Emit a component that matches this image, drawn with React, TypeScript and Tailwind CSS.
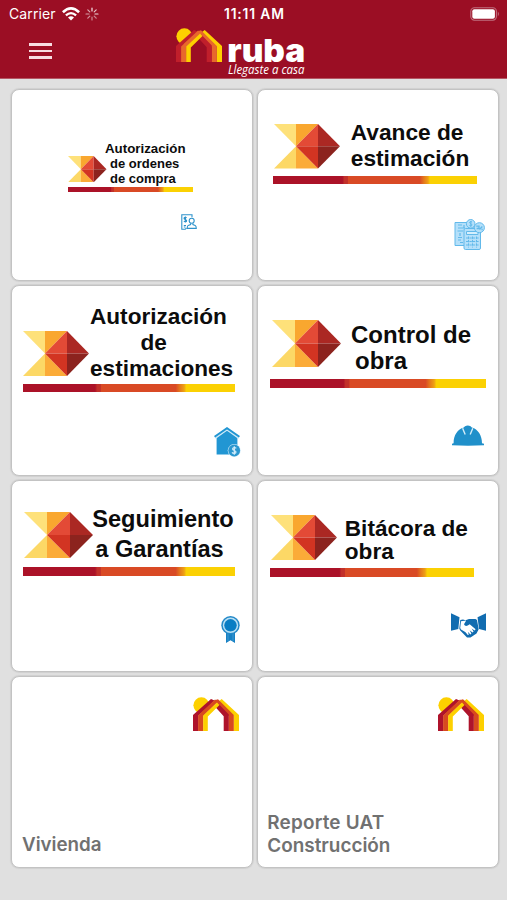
import type { ReactNode } from "react";

function House({ className, onRed = false }: { className: string; onRed?: boolean }) {
  const crimson = onRed ? "#c01f2b" : "#ae132b";
  const orange = onRed ? "#e8682c" : "#d84a1f";
  return (
    <svg viewBox="0 0 46 34" preserveAspectRatio="none" className={className}>
      <circle cx="8.4" cy="8.3" r="8" fill="#fdd000" />
      <path d="M26 4L28.7 2L46 18V34H40.6V18.5Z" fill="#fdd000" />
      <path d="M22.5 3L25 2.3L40.8 18V34H35.5V19L24 8Z" fill={orange} />
      <path d="M22.8 10.5L25.2 6.6L35.8 17.6V34H30.7V19.2Z" fill={crimson} />
      <path d="M0 34V18L18 2L21.5 3.5L5.3 18.8V34Z" fill={crimson} />
      <path d="M5.1 34V18.4L22 2.6L25.2 4.6L10.4 19V34Z" fill={orange} />
      <path d="M10.2 34V18.6L24 5.4L26.5 8L14.8 19.4V34Z" fill="#fdd000" />
    </svg>
  );
}

function Arrow({ className }: { className: string }) {
  return (
    <svg viewBox="0 0 66 44" preserveAspectRatio="none" className={`shrink-0 ${className}`}>
      <path d="M0 0H22V22Z" fill="#fee17a" />
      <path d="M0 44H22V22Z" fill="#fcd866" />
      <path d="M22 0H44L22 22Z" fill="#f9a72f" />
      <path d="M22 44H44L22 22Z" fill="#fbab38" />
      <path d="M44 0L22 22H44Z" fill="#e34a36" />
      <path d="M44 44L22 22H44Z" fill="#d23422" />
      <path d="M44 0L66 22H44Z" fill="#ab2823" />
      <path d="M44 44L66 22H44Z" fill="#8c231e" />
    </svg>
  );
}

function Stripe({ className }: { className: string }) {
  return (
    <div
      className={`shrink-0 bg-[linear-gradient(90deg,#ab1228_0%,#ab1228_34%,#c2302a_35%,#c2302a_36.5%,#d94a25_37%,#d94a25_72%,#e5791c_74%,#eea014_76%,#fbd103_77%)] ${className}`}
    />
  );
}

function Card({ children }: { children: ReactNode }) {
  return (
    <div className="flex flex-col overflow-hidden rounded-[8px] border border-[#c3c3c3] bg-white shadow-[0_0_1px_1px_#d0d0d0]">
      {children}
    </div>
  );
}

function InvoiceUser() {
  return (
    <svg viewBox="0 0 16 16" className="mt-[22px] ml-[169px] size-[16px]" fill="none" stroke="#2f93cb" strokeWidth="1.1">
      <path d="M11 3.2V.7H.8V15.3H4.2L5.5 14M2.8 11.5H5M2.8 13H4.5" />
      <path d="M5.6 3.8C4.8 3 3 3.2 3.1 4.5C3.2 5.8 5.6 5.2 5.6 6.7C5.6 8 3.7 8.1 2.9 7.2M4.4 2.4V8.6" strokeWidth="1.2" />
      <circle cx="10.7" cy="6.7" r="2.5" />
      <path d="M9.6 9.3V10.6L7.2 11.4Q6.2 12 6.2 14.4H15.3Q15.3 12 14.2 11.4L11.9 10.6V9.3" />
    </svg>
  );
}

function Calculator() {
  return (
    <svg viewBox="0 0 31 31" className="mt-[35px] ml-[196px] size-[31px]" fill="#b5e0fa" stroke="#62b9ea" strokeWidth="1">
      <path d="M1 3.5H20V26.5H1Z" />
      <path d="M4 6H8M4 9H11M3.5 12H9M6 14V17M4 18.5H8M4 21H7M6 23.5H9M10 6V9M11 12V15" strokeWidth="1.2" />
      <rect x="10" y="9.5" width="16.5" height="21" rx="1.5" />
      <path d="M12.5 12.5H24V15.5H12.5Z" fill="#d5effd" />
      <path d="M12 19H25M12 22.5H25M12 26H25M14.5 17.5V28.5M18.5 17.5V28.5M22.5 17.5V28.5" strokeDasharray="2.4 1" />
      <circle cx="16.7" cy="4.8" r="4.3" />
      <path d="M18 3C16.5 2.2 15.3 3 15.7 4C16.2 5 18 4.6 18 6C17.8 7 16.4 7.2 15.4 6.4M16.8 2V7.8" />
      <circle cx="25.4" cy="8.7" r="5" />
      <path d="M22.2 7.2H25V9.5H22.6M25.5 10.5L28.3 7.5M27.5 10.5H28.7" strokeWidth="1.3" />
    </svg>
  );
}

function HousePrice() {
  return (
    <svg viewBox="0 0 27 30" className="mt-[35px] ml-[202px] h-[30px] w-[27px]">
      <path d="M2.6 10.8L13 3L23.4 10.8V27.5H2.6Z" fill="#2196d3" />
      <path d="M1 10.8L13 2.2L25 10.8" fill="none" stroke="#cbe8f7" strokeWidth="2.6" />
      <path d="M.6 9.7L13 1.2L25.4 9.7" fill="none" stroke="#2196d3" strokeWidth="2" />
      <circle cx="20.2" cy="23.5" r="6.5" fill="#d5eefb" />
      <circle cx="20.2" cy="23.5" r="5.9" fill="#2b97cf" />
      <path d="M22.2 21.4C21.4 20.1 18.5 20.2 18.6 22C18.7 23.8 22 23.1 22 25C22 26.8 19 26.9 18 25.4M20.3 19.3V27.8" fill="none" stroke="#d5eefb" strokeWidth="1.2" />
    </svg>
  );
}

function Helmet() {
  return (
    <svg viewBox="0 0 32 21" className="mt-[36.5px] ml-[193.5px] h-[21px] w-[32px]">
      <path d="M0 20.3V18.8L1.6 18.2C1.5 10 5.6 4.2 11.8 2.4L13 1.3Q15.8-.5 18.6 1.3L19.8 2.4C26 4.2 30 10 30 18.2L32 18.8V20.3Q16 21.2 0 20.3Z" fill="#2090ca" />
      <path d="M10.6 3.2L13.2 9.4M20.8 3.2L18.2 9.4" stroke="#d3ecf8" strokeWidth="1.4" fill="none" />
    </svg>
  );
}

function Rosette() {
  return (
    <svg viewBox="0 0 19 27" className="mt-[40px] ml-[208.5px] h-[27px] w-[19px]">
      <path d="M5 15H14V27L9.5 24.3L5 27Z" fill="#1780c3" />
      <path d="M7 18V25M12 18V25" stroke="#4ba3d8" strokeWidth=".7" />
      <circle cx="9.5" cy="9.3" r="9.2" fill="#2489c8" />
      <circle cx="9.5" cy="9.3" r="7" fill="none" stroke="#b9e0f5" strokeWidth="1.5" />
      <circle cx="9.5" cy="9.3" r="5.8" fill="#087dc4" />
    </svg>
  );
}

function Handshake() {
  return (
    <svg viewBox="0 0 35 25" className="mt-[36.3px] ml-[193px] h-[25px] w-[35px]">
      <path d="M0 .3L8.5 4.3L7.3 16L0 17.8Z" fill="#116cb0" />
      <path d="M35 .3L26.5 4.3L28 16L35 17.8Z" fill="#116cb0" />
      <path d="M14.5 7.2L18 6H24.5L26 7L27.7 16.2L25.5 20.5L19.5 24.6L16 24.4L9 17.3L8.3 15.5L9.3 7L12 6.6Z" fill="#116cb0" />
      <path d="M10 8.2L15.2 7.5L13 11.3Q14.5 14.5 18.7 11.2L24.6 16.2L23.6 17.4L20.6 15.4L22.6 18.6L21.6 19.6L18.6 17.2L20.4 20.6L19.4 21.4L16.8 18.8L17.8 21.8L16.8 22L14.8 19.6L13 18.2L10 16.5L9.2 15Z" fill="#fff" />
    </svg>
  );
}

function StatusBar() {
  return (
    <div className="flex h-[27px] items-center text-white">
      <span className="w-[62px] pl-[9px] text-[14px] leading-[27px] tracking-[0.1px]">Carrier</span>
      <svg viewBox="0 0 18 14" className="h-[14px] w-[18px]" fill="none" stroke="#fff" strokeWidth="2.6">
        <path d="M.9 5.3Q9-2.4 17.1 5.3" />
        <path d="M3.9 8.4Q9 3.8 14.1 8.4" strokeWidth="2.3" />
        <path d="M9 13.4L6 10.5Q9 8.2 12 10.5Z" fill="#fff" stroke="none" />
      </svg>
      <svg viewBox="0 0 14 14" className="ml-[4.5px] size-[14px]" stroke="#fff" strokeWidth="1.2" strokeLinecap="round">
        <path d="M7 1V4" opacity=".9" />
        <path d="M11.2 2.8L9.2 4.8" opacity=".75" />
        <path d="M13 7H10" opacity=".85" />
        <path d="M11.2 11.2L9.2 9.2" opacity=".5" />
        <path d="M7 13V10" opacity=".5" />
        <path d="M2.8 11.2L4.8 9.2" opacity=".55" />
        <path d="M1 7H4" opacity=".6" />
        <path d="M2.8 2.8L4.8 4.8" opacity=".65" />
      </svg>
      <span className="ml-[125.5px] pt-px text-[13.8px] leading-[26px] font-semibold tracking-[0.85px] whitespace-nowrap">11:11 AM</span>
      <svg viewBox="0 0 30 14" className="mr-[7.5px] ml-auto h-[14px] w-[30px]">
        <rect x=".8" y=".8" width="25.6" height="12.4" rx="3.6" fill="none" stroke="#c0707f" strokeWidth="1.1" />
        <rect x="2.3" y="2.3" width="22.6" height="9.4" rx="2" fill="#fff" />
        <path d="M27.8 4.6Q30 7 27.8 9.4Z" fill="#c0707f" />
      </svg>
    </div>
  );
}

export default function App() {
  return (
    <div className="min-h-[900px] w-[507px] bg-[#e0e0e0] font-['Inter','Liberation_Sans',sans-serif]">
      <header className="h-[79px] border-b border-[#b45764] bg-[#9b0e24]">
        <StatusBar />
        <div className="flex items-start">
          <button aria-label="Menú" className="mt-[16px] ml-[28.5px] flex w-[23.5px] flex-col gap-[4px]">
            <span className="h-[2.7px] bg-[#f8dde2]" />
            <span className="h-[2.7px] bg-[#f8dde2]" />
            <span className="h-[2.7px] bg-[#f8dde2]" />
          </button>
          <House onRed className="mt-[0.7px] ml-[124px] h-[34px] w-[46px]" />
          <svg viewBox="0 0 84 50" className="ml-[4px] h-[50px] w-[84px]" fill="#fff">
            <text x="1.2" y="34.7" textLength="78" lengthAdjust="spacingAndGlyphs" className="font-['Inter',sans-serif] text-[32px] font-black">
              ruba
            </text>
            <text x="2" y="46.8" textLength="76.5" lengthAdjust="spacingAndGlyphs" className="font-['Open_Sans',sans-serif] text-[12.2px] italic">
              Llegaste a casa
            </text>
          </svg>
        </div>
      </header>

      <main className="grid grid-cols-[242px_242px] grid-rows-[192px_191px_192px_192px] gap-1 pt-[10px] pl-[11px] font-['Liberation_Sans',Arial,sans-serif] font-bold text-[#0c0c0c]">
        <Card>
          <div className="flex h-[97px] shrink-0 items-start">
            <Arrow className="mt-[66px] ml-[56px] h-[26.3px] w-[38.5px]" />
            <div className="mt-[51px] -ml-[1.5px] text-[13px] leading-[15px] whitespace-nowrap">
              <div className="text-[13.3px]">Autorización</div>
              <div className="pl-[5px]">de ordenes</div>
              <div className="pl-[5px]">de compra</div>
            </div>
          </div>
          <Stripe className="ml-[56px] h-[5px] w-[124.5px]" />
          <InvoiceUser />
        </Card>

        <Card>
          <div className="flex h-[85.5px] shrink-0 items-start">
            <Arrow className="mt-[34px] ml-[16px] h-[44.5px] w-[66px]" />
            <div className="mt-[28.5px] ml-[10.8px] text-[22.7px] leading-[26px] whitespace-nowrap">
              <div>Avance de</div>
              <div>estimación</div>
            </div>
          </div>
          <Stripe className="ml-[14.5px] h-[8.5px] w-[204.5px]" />
          <Calculator />
        </Card>

        <Card>
          <div className="flex h-[97.5px] shrink-0 items-start">
            <Arrow className="mt-[44.5px] ml-[10.5px] h-[45px] w-[66px]" />
            <div className="mt-[17.5px] ml-[1.5px] text-[22.6px] leading-[26px] whitespace-nowrap">
              <div>Autorización</div>
              <div className="pl-[50.5px]">de</div>
              <div>estimaciones</div>
            </div>
          </div>
          <Stripe className="ml-[10.5px] h-[8.5px] w-[212.5px]" />
          <HousePrice />
        </Card>

        <Card>
          <div className="flex h-[93.3px] shrink-0 items-start">
            <Arrow className="mt-[34.3px] ml-[13.5px] h-[47px] w-[69px]" />
            <div className="mt-[35.6px] ml-[10.5px] text-[24px] leading-[26.3px] whitespace-nowrap">
              <div>Control de</div>
              <div className="pl-[4px]">obra</div>
            </div>
          </div>
          <Stripe className="ml-[12px] h-[9px] w-[215.5px]" />
          <Helmet />
        </Card>

        <Card>
          <div className="flex h-[86px] shrink-0 items-start">
            <Arrow className="mt-[30.7px] ml-[11.5px] h-[46px] w-[69px]" />
            <div className="mt-[22.7px] -ml-[0.3px] text-[23.6px] leading-[30.3px] whitespace-nowrap">
              <div>Seguimiento</div>
              <div className="pl-[3px]">a Garantías</div>
            </div>
          </div>
          <Stripe className="ml-[10.5px] h-[8.7px] w-[212.5px]" />
          <Rosette />
        </Card>

        <Card>
          <div className="flex h-[87px] shrink-0 items-start">
            <Arrow className="mt-[34px] ml-[13px] h-[45px] w-[66px]" />
            <div className="mt-[35.8px] ml-[7.8px] text-[22.6px] leading-[23.4px] whitespace-nowrap">
              <div>Bitácora de</div>
              <div>obra</div>
            </div>
          </div>
          <Stripe className="ml-[11.5px] h-[8.7px] w-[204.5px]" />
          <Handshake />
        </Card>

        <Card>
          <House className="mt-[20px] ml-[180.7px] h-[34px] w-[46px] shrink-0" />
          <div className="mt-auto mb-[10.5px] ml-[10px] font-['Inter',sans-serif] text-[18.8px] leading-[23.3px] font-semibold text-[#717171]">
            Vivienda
          </div>
        </Card>

        <Card>
          <House className="mt-[20px] ml-[180.2px] h-[34px] w-[46px] shrink-0" />
          <div className="mt-auto mb-[9.5px] ml-[9.3px] font-['Inter',sans-serif] text-[18.9px] leading-[23.3px] font-semibold text-[#717171]">
            <div className="tracking-[0.2px]">Reporte UAT</div>
            <div>Construcción</div>
          </div>
        </Card>
      </main>
    </div>
  );
}
